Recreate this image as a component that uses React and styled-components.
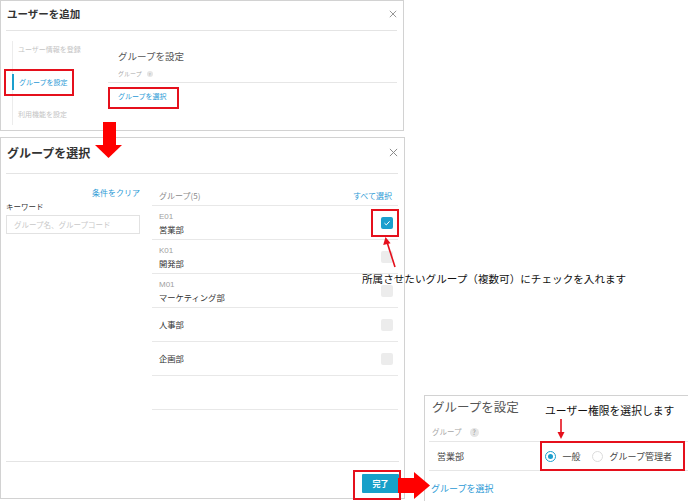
import React from "react";
import styled, { createGlobalStyle, css } from "styled-components";

const Global = createGlobalStyle`
  html, body { margin: 0; padding: 0; background: #fff; }
  body { font-family: "Noto Sans CJK JP", "Noto Sans", sans-serif; }
  * { box-sizing: border-box; }
  svg { display: block; }
`;

const BLUE = "#2c9ad6";
const ACCENT = "#1b9fce";
const RED = "#e5101c";

const Canvas = styled.div`
  position: relative;
  width: 688px;
  height: 501px;
  overflow: hidden;
  background: #fff;
`;

/* screenshot windows placed on the collage canvas */
const Shot = styled.div`
  position: absolute;
  left: ${(p) => p.$x}px;
  top: ${(p) => p.$y}px;
  width: ${(p) => p.$w}px;
  height: ${(p) => p.$h}px;
  border: 1px solid #d2d2d2;
  background: #fff;
  display: flex;
  flex-direction: column;
  overflow: hidden;
`;

const Header = styled.div`
  display: flex;
  justify-content: space-between;
  align-items: flex-start;
  margin: 0 6px 0 5px;
  padding: ${(p) => p.$pt}px 0 0 1px;
  height: ${(p) => p.$h}px;
  border-bottom: 1px solid #e4e4e4;
  flex-shrink: 0;
`;

const Title = styled.div`
  font-size: ${(p) => p.$size}px;
  line-height: ${(p) => p.$lh}px;
  font-weight: 700;
  color: #333;
`;

const CloseBox = styled.span`
  display: block;
  width: ${(p) => p.$s}px;
  height: ${(p) => p.$s}px;
  margin-top: ${(p) => p.$mt}px;
  line-height: 0;
`;

const Close = ({ s, mt }) => (
  <CloseBox $s={s} $mt={mt}>
    <svg width={s} height={s} viewBox="0 0 10 10">
      <path d="M1 1L9 9M9 1L1 9" stroke="#8a8a8a" strokeWidth="1.1" fill="none" />
    </svg>
  </CloseBox>
);

/* ---------- window 1 ---------- */
const Body1 = styled.div`
  display: flex;
  flex: 1;
`;

const StepNav = styled.div`
  margin: 10px 0 0 11px;
  width: 96px;
  height: 84px;
  border-left: 1px solid #ececec;
  display: flex;
  flex-direction: column;
  gap: 16.5px;
`;

const Step = styled.div`
  height: 16px;
  line-height: 16px;
  font-size: 7px;
  padding-left: 5px;
  color: #c4c4c4;
  ${(p) =>
    p.$active &&
    css`
      margin-left: -1px;
      border-left: 2px solid ${ACCENT};
      color: ${BLUE};
    `}
`;

const Content1 = styled.div`
  flex: 1;
  margin-right: 6px;
  display: flex;
  flex-direction: column;
`;

const SectionTitle = styled.div`
  font-size: ${(p) => p.$size}px;
  line-height: ${(p) => p.$lh}px;
  color: #555;
  padding-left: ${(p) => p.$pl || 0}px;
  margin-top: ${(p) => p.$mt}px;
`;

const FieldLabel = styled.div`
  display: flex;
  align-items: center;
  gap: ${(p) => p.$gap}px;
  font-size: ${(p) => p.$size}px;
  line-height: ${(p) => p.$lh}px;
  color: #a8a8a8;
  margin-top: ${(p) => p.$mt}px;
  padding: 0 0 ${(p) => p.$pb}px ${(p) => p.$pl}px;
  border-bottom: 1px solid #e6e6e6;
`;

const Help = styled.span`
  display: inline-flex;
  align-items: center;
  justify-content: center;
  width: ${(p) => p.$s}px;
  height: ${(p) => p.$s}px;
  border-radius: 50%;
  background: #e6e6e6;
  color: #9a9a9a;
  font-size: ${(p) => p.$s - 2}px;
  line-height: 1;
`;

const Link = styled.div`
  font-size: ${(p) => p.$size}px;
  line-height: ${(p) => p.$lh}px;
  color: ${BLUE};
  margin-top: ${(p) => p.$mt || 0}px;
  padding-left: ${(p) => p.$pl || 0}px;
  text-align: ${(p) => p.$align || "left"};
`;

/* ---------- window 2 ---------- */
const Body2 = styled.div`
  display: flex;
  height: 287px;
  flex-shrink: 0;
`;

const FilterPane = styled.div`
  width: 134px;
  margin-left: 5px;
  padding-top: 13px;
  display: flex;
  flex-direction: column;
`;

const Label = styled.div`
  font-size: 7.5px;
  line-height: 12px;
  color: #333;
  margin-top: 2px;
`;

const Input = styled.div`
  margin-top: 2px;
  height: 19px;
  border: 1px solid #e2e2e2;
  padding-left: 7px;
  font-size: 7.5px;
  line-height: 17px;
  color: #c8c8c8;
`;

const ListPane = styled.div`
  flex: 1;
  margin: 0 6px 0 12px;
  display: flex;
  flex-direction: column;
`;

const ListHead = styled.div`
  display: flex;
  justify-content: space-between;
  padding: 16px 6px 3px 7px;
  line-height: 12px;
  font-size: 8px;
  border-bottom: 1px solid #e8e8e8;
  color: #8a8a8a;
`;

const Row = styled.div`
  height: 34px;
  display: flex;
  align-items: center;
  justify-content: space-between;
  padding: 0 5px 0 7px;
  border-bottom: 1px solid #e8e8e8;
`;

const RowText = styled.div`
  display: flex;
  flex-direction: column;
`;

const Code = styled.span`
  font-family: "Liberation Sans", "Noto Sans CJK JP", sans-serif;
  font-size: 8px;
  line-height: 13px;
  color: #a0a0a0;
`;

const Name = styled.span`
  font-size: 8.3px;
  line-height: 13px;
  color: #333;
`;

const Check = styled.span`
  width: 12px;
  height: 12px;
  border-radius: 2px;
  background: ${(p) => (p.$checked ? ACCENT : "#ececec")};
  display: flex;
  align-items: center;
  justify-content: center;
`;

const Footer = styled.div`
  flex: 1;
  margin: 0 5px 0 5px;
  border-top: 1px solid #e4e4e4;
  padding-top: 12px;
  display: flex;
  justify-content: flex-end;
`;

const Button = styled.div`
  width: 37px;
  height: 19px;
  background: #17a0c9;
  color: #fff;
  font-size: 8px;
  font-weight: 700;
  display: flex;
  align-items: center;
  justify-content: center;
  border-radius: 1px;
`;

/* ---------- window 3 ---------- */
const Content3 = styled.div`
  display: flex;
  flex-direction: column;
  margin-left: 4px;
`;

const MemberRow = styled.div`
  height: 29px;
  display: flex;
  align-items: center;
  border-bottom: 1px solid #e6e6e6;
  padding-left: 8px;
`;

const MemberName = styled.span`
  width: 108px;
  font-size: 9px;
  color: #444;
`;

const Radio = styled.span`
  width: 11px;
  height: 11px;
  border-radius: 50%;
  border: 1px solid ${(p) => (p.$checked ? ACCENT : "#dcdcdc")};
  display: flex;
  align-items: center;
  justify-content: center;
  margin-left: ${(p) => p.$ml || 0}px;
  &::after {
    content: "";
    width: 5px;
    height: 5px;
    border-radius: 50%;
    background: ${(p) => (p.$checked ? ACCENT : "transparent")};
  }
`;

const RadioText = styled.span`
  font-size: 9px;
  color: #444;
  margin-left: 6.5px;
`;

/* ---------- annotations ---------- */
const RedBox = styled.div`
  position: absolute;
  left: ${(p) => p.$x}px;
  top: ${(p) => p.$y}px;
  width: ${(p) => p.$w}px;
  height: ${(p) => p.$h}px;
  border: 2px solid ${RED};
`;

const Overlay = styled.svg`
  position: absolute;
  left: ${(p) => p.$x}px;
  top: ${(p) => p.$y}px;
  overflow: visible;
`;

const Note = styled.div`
  position: absolute;
  left: ${(p) => p.$x}px;
  top: ${(p) => p.$y}px;
  font-size: ${(p) => p.$size}px;
  line-height: 14px;
  color: #111;
  white-space: nowrap;
`;

const groups = [
  { code: "E01", name: "営業部", checked: true },
  { code: "K01", name: "開発部" },
  { code: "M01", name: "マーケティング部" },
  { code: "", name: "人事部" },
  { code: "", name: "企画部" },
];

export default function App() {
  return (
    <>
      <Global />
      <Canvas>
        {/* screenshot 1 */}
        <Shot $x={0} $y={0} $w={404} $h={131}>
          <Header $pt={6} $h={30}>
            <Title $size={10.5} $lh={14}>ユーザーを追加</Title>
            <Close s={8} mt={3} />
          </Header>
          <Body1>
            <StepNav>
              <Step>ユーザー情報を登録</Step>
              <Step $active>グループを設定</Step>
              <Step>利用機能を設定</Step>
            </StepNav>
            <Content1>
              <SectionTitle $size={9.5} $lh={14} $pl={10} $mt={18}>
                グループを設定
              </SectionTitle>
              <FieldLabel $size={6} $lh={10} $mt={6} $pb={3} $pl={10} $gap={5}>
                グループ <Help $s={6}>?</Help>
              </FieldLabel>
              <Link $size={7} $lh={10} $mt={8} $pl={10}>
                グループを選択
              </Link>
            </Content1>
          </Body1>
        </Shot>

        {/* screenshot 2 */}
        <Shot $x={0} $y={137} $w={405} $h={362}>
          <Header $pt={7} $h={36}>
            <Title $size={12} $lh={16}>グループを選択</Title>
            <Close s={9} mt={3} />
          </Header>
          <Body2>
            <FilterPane>
              <Link $size={8} $lh={12} $align="right">
                条件をクリア
              </Link>
              <Label>キーワード</Label>
              <Input>グループ名、グループコード</Input>
            </FilterPane>
            <ListPane>
              <ListHead>
                <span>グループ(5)</span>
                <Link as="span" $size={8} $lh={12}>
                  すべて選択
                </Link>
              </ListHead>
              {groups.map((g) => (
                <Row key={g.name}>
                  <RowText>
                    {g.code && <Code>{g.code}</Code>}
                    <Name>{g.name}</Name>
                  </RowText>
                  <Check $checked={g.checked}>
                    {g.checked && (
                      <svg width="8" height="8" viewBox="0 0 8 8">
                        <path d="M1.5 4.2L3.3 5.9L6.6 2.3" stroke="#fff" strokeWidth="1" fill="none" />
                      </svg>
                    )}
                  </Check>
                </Row>
              ))}
              <Row />
            </ListPane>
          </Body2>
          <Footer>
            <Button>完了</Button>
          </Footer>
        </Shot>

        {/* screenshot 3 */}
        <Shot $x={424} $y={395} $w={300} $h={120}>
          <SectionTitle $size={12.5} $lh={16} $pl={7} $mt={3}>
            グループを設定
          </SectionTitle>
          <Content3>
            <FieldLabel $size={7.5} $lh={10} $mt={12} $pb={4} $pl={3} $gap={8}>
              グループ <Help $s={9}>?</Help>
            </FieldLabel>
            <MemberRow>
              <MemberName>営業部</MemberName>
              <Radio $checked />
              <RadioText>一般</RadioText>
              <Radio $ml={11.5} />
              <RadioText>グループ管理者</RadioText>
            </MemberRow>
            <Link $size={9} $lh={12} $mt={12} $pl={2}>
              グループを選択
            </Link>
          </Content3>
        </Shot>

        {/* annotations */}
        <RedBox $x={4} $y={69} $w={70} $h={27} />
        <RedBox $x={108} $y={87} $w={71} $h={22} />
        <RedBox $x={371} $y={209} $w={28} $h={28} />
        <RedBox $x={353} $y={470} $w={48} $h={30} />
        <RedBox $x={540} $y={441} $w={145} $h={30} />

        <Overlay $x={95} $y={122} width="27" height="36">
          <rect x="8" y="0" width="13" height="24" fill="#f00" />
          <polygon points="0,23 27,23 13.5,36" fill="#f00" />
        </Overlay>

        <Overlay $x={398} $y={472} width="32" height="27">
          <rect x="0" y="6" width="17" height="15" fill="#f00" />
          <polygon points="16,0 32,13.5 16,27" fill="#f00" />
        </Overlay>

        <Overlay $x={380} $y={236} width="20" height="34">
          <line x1="15" y1="31" x2="7" y2="6" stroke="#e5101c" strokeWidth="1.6" />
          <polygon points="5.5,1 3.2,9 10.6,7.2" fill="#e5101c" />
        </Overlay>

        <Overlay $x={556} $y={419} width="10" height="21">
          <line x1="5" y1="0" x2="5" y2="14" stroke="#e5101c" strokeWidth="1.6" />
          <polygon points="1.5,13 8.5,13 5,20" fill="#e5101c" />
        </Overlay>

        <Note $x={362} $y={272} $size={10.6}>
          所属させたいグループ（複数可）にチェックを入れます
        </Note>
        <Note $x={545} $y={403} $size={10.8}>
          ユーザー権限を選択します
        </Note>
      </Canvas>
    </>
  );
}
